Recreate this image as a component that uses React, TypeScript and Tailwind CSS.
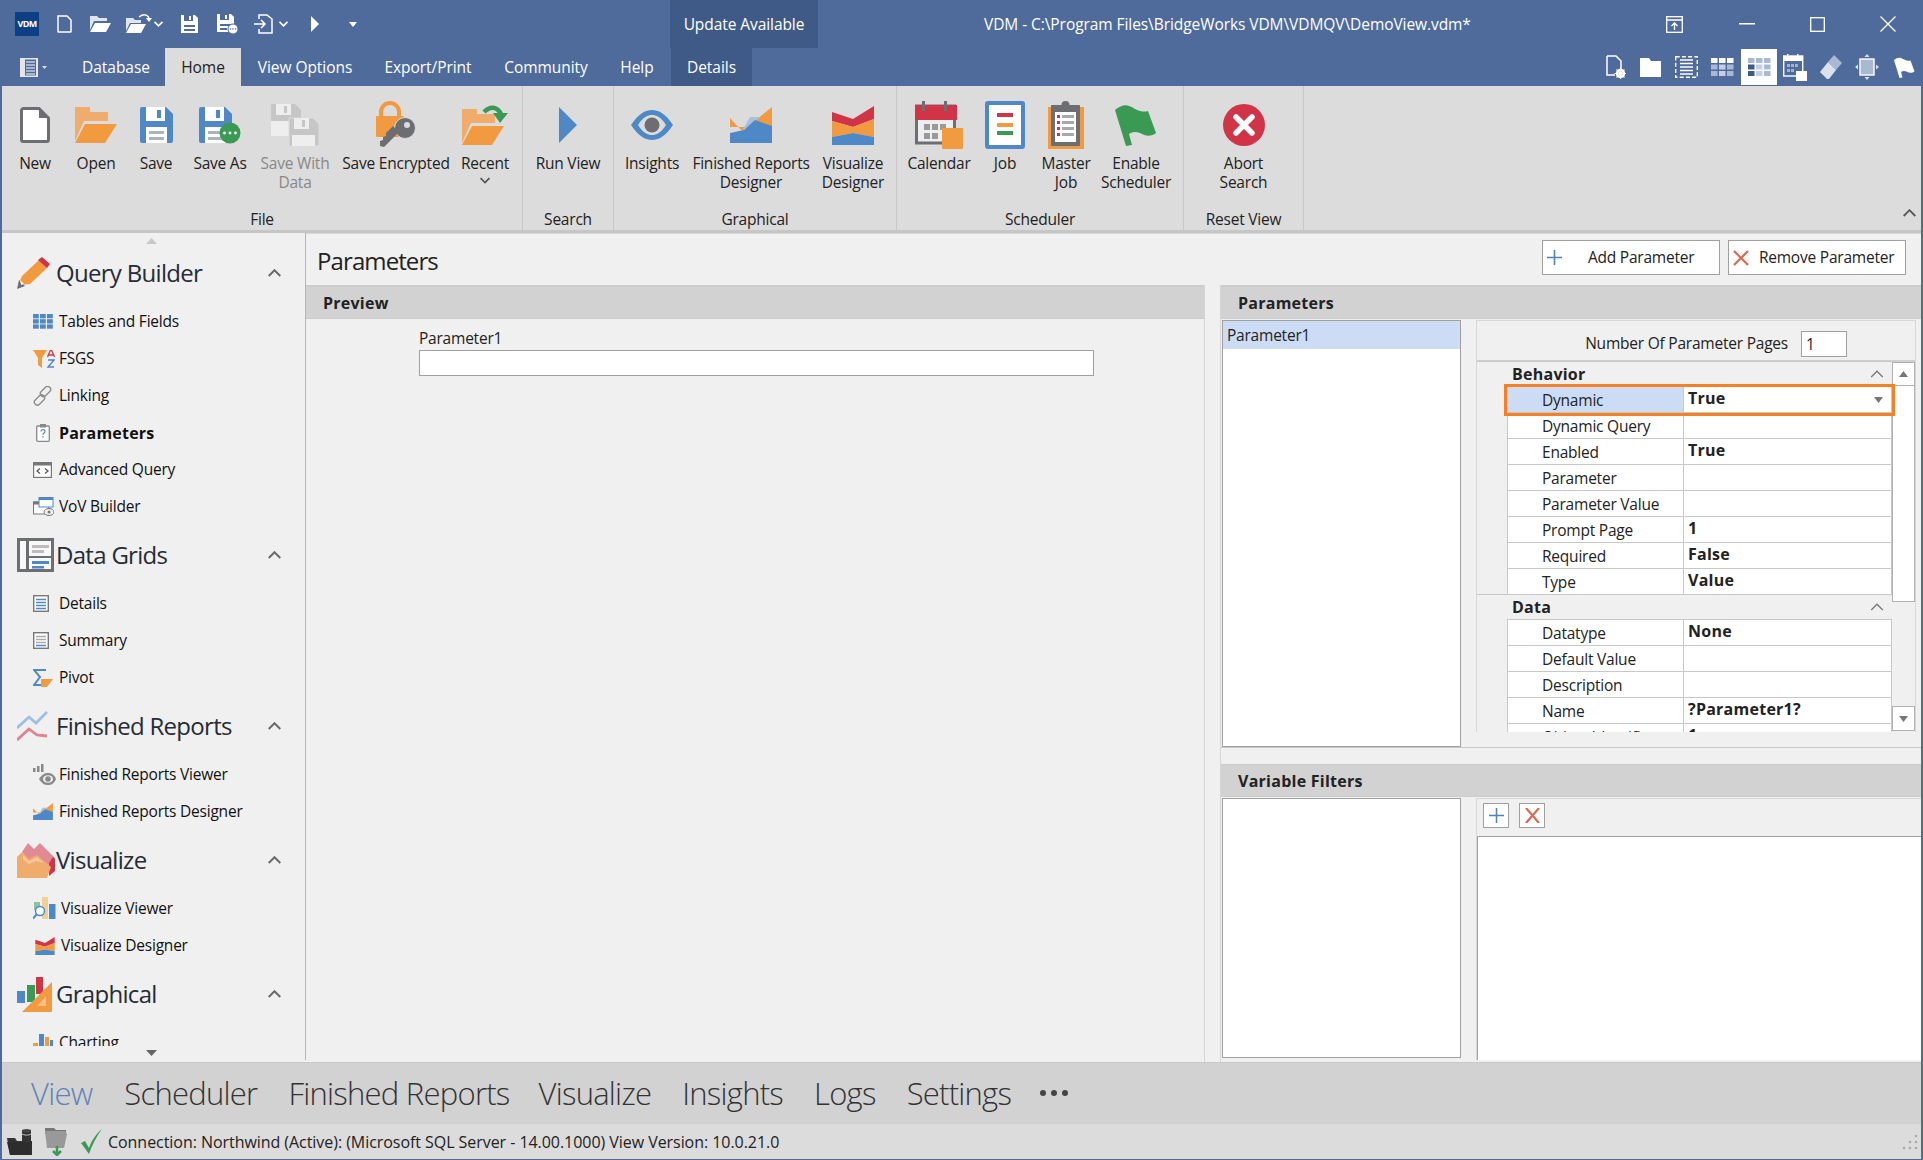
import React from "react";

const BLUE = "#4e88c7";
const ORANGE = "#f29a3f";
const LORANGE = "#f0ac6c";
const RED = "#d13347";
const GREEN = "#3a9a54";
const GRAY = "#6d6e71";

type IconProps = { w?: number; h?: number };

const Doc = ({ w = 30, h = 36 }: IconProps) => (
  <svg width={w} height={h} viewBox="0 0 30 36">
    <path d="M3 1.5h16l9.5 9.5v21.5a2 2 0 0 1-2 2H3.5a2 2 0 0 1-2-2V3.5a2 2 0 0 1 2-2z" fill="#fff" stroke={GRAY} strokeWidth="3" />
    <path d="M19 1.5v9.5h9.5z" fill={GRAY} />
  </svg>
);
const Folder = ({ w = 42, h = 36 }: IconProps) => (
  <svg width={w} height={h} viewBox="0 0 42 36">
    <path d="M0 0h15v5h18v9H9L0 34z" fill={LORANGE} />
    <path d="M10 17h32L30 36H0z" fill={ORANGE} />
  </svg>
);
const Floppy = ({ w = 33, h = 36, c = BLUE }: IconProps & { c?: string }) => (
  <svg width={w} height={h} viewBox="0 0 33 36">
    <path d="M2 0h24l7 7v27a2 2 0 0 1-2 2H2a2 2 0 0 1-2-2V2a2 2 0 0 1 2-2z" fill={c} />
    <rect x="6" y="0" width="19" height="14" fill="#fff" />
    <rect x="17" y="3" width="4" height="8" fill={c} />
    <rect x="6" y="20" width="21" height="16" fill="#fff" />
    <rect x="9" y="24" width="15" height="3" fill="#aab4bf" />
    <rect x="9" y="30" width="15" height="3" fill="#aab4bf" />
  </svg>
);
const SaveAsIcon = () => (
  <svg width="42" height="37" viewBox="0 0 42 37">
    <path d="M2 0h24l7 7v27a2 2 0 0 1-2 2H2a2 2 0 0 1-2-2V2a2 2 0 0 1 2-2z" fill={BLUE} />
    <rect x="6" y="0" width="19" height="14" fill="#fff" />
    <rect x="17" y="3" width="4" height="8" fill={BLUE} />
    <rect x="6" y="20" width="21" height="16" fill="#fff" />
    <rect x="9" y="24" width="15" height="3" fill="#aab4bf" />
    <rect x="9" y="30" width="15" height="3" fill="#aab4bf" />
    <circle cx="31" cy="26" r="10.5" fill={GREEN} />
    <circle cx="25.5" cy="26" r="1.4" fill="#fff" />
    <circle cx="31" cy="26" r="1.4" fill="#fff" />
    <circle cx="36.5" cy="26" r="1.4" fill="#fff" />
  </svg>
);
const SaveDataIcon = () => (
  <svg width="48" height="42" viewBox="0 0 48 42">
    <path d="M0 0h24l6 6v26H0z" fill="#c6c6c6" />
    <rect x="5" y="0" width="15" height="11" fill="#eee" />
    <rect x="13" y="2" width="3" height="7" fill="#c6c6c6" />
    <rect x="0" y="17" width="24" height="15" fill="#eee" />
    <path d="M18 14h24l6 6v22H18z" fill="#c6c6c6" stroke="#dcdcdc" strokeWidth="1" />
    <rect x="23" y="14" width="15" height="11" fill="#eee" />
    <rect x="31" y="16" width="3" height="7" fill="#c6c6c6" />
    <rect x="21" y="31" width="23" height="11" fill="#eee" />
  </svg>
);
const LockKey = () => (
  <svg width="40" height="48" viewBox="0 0 40 48">
    <path d="M5 16v-5a9 9 0 0 1 18 0v5" fill="none" stroke={ORANGE} strokeWidth="4" />
    <rect x="0" y="15" width="28" height="21" rx="1" fill={ORANGE} />
    <circle cx="29" cy="27" r="10.5" fill={GRAY} stroke="#dcdcdc" strokeWidth="1" />
    <path d="M23 31L8 46l-4-1v-5l3-1v-3l3-1v-3l7-7z" fill={GRAY} />
    <circle cx="31" cy="24" r="3" fill="#dcdcdc" />
  </svg>
);
const RecentIcon = () => (
  <svg width="46" height="40" viewBox="0 0 46 40">
    <path d="M0 4h15v5h18v9H9L0 38z" fill={LORANGE} />
    <path d="M10 21h32L30 40H0z" fill={ORANGE} />
    <path d="M22 7c6-6 13-6 17 2" fill="none" stroke={GREEN} strokeWidth="4.5" />
    <path d="M31 8h15l-8 10z" fill={GREEN} />
  </svg>
);
const Tri = ({ w = 18, h = 36, c = BLUE }: IconProps & { c?: string }) => (
  <svg width={w} height={h} viewBox="0 0 18 36"><path d="M0 0l18 18L0 36z" fill={c} /></svg>
);
const Eye = () => (
  <svg width="42" height="30" viewBox="0 0 42 30">
    <path d="M0 15C8 3 15 0 21 0s13 3 21 15c-8 12-15 15-21 15S8 27 0 15z" fill={BLUE} />
    <path d="M7 15c5-8 10-10 14-10s9 2 14 10c-5 8-10 10-14 10S12 23 7 15z" fill="#dcdcdc" />
    <circle cx="21" cy="15" r="7.5" fill={GRAY} />
  </svg>
);
const AreaChart = ({ w = 42, h = 36 }: IconProps) => (
  <svg width={w} height={h} viewBox="0 0 42 36">
    <path d="M0 11l12 13L42 0v20H0z" fill={ORANGE} />
    <path d="M12 24l8-14h11L25 14z" fill="#a8c0dc" />
    <path d="M0 26l14-3 11-10 17 6v17H0z" fill={BLUE} />
  </svg>
);
const Ribbons = ({ w = 42, h = 39 }: IconProps) => (
  <svg width={w} height={h} viewBox="0 0 42 39">
    <path d="M0 6L21 13 42 0V13L21 21 0 15z" fill={RED} />
    <path d="M0 15L21 21 42 13V31L21 27 0 31z" fill={ORANGE} />
    <path d="M0 31L21 27 42 31V39H0z" fill={BLUE} />
  </svg>
);
const Cal = () => (
  <svg width="48" height="48" viewBox="0 0 48 48">
    <rect x="1.5" y="5" width="38" height="37" fill="#eee" stroke={GRAY} strokeWidth="3" />
    <rect x="0" y="4" width="42" height="15" fill={RED} />
    <rect x="7" y="0" width="3" height="10" fill={GRAY} />
    <rect x="29" y="0" width="3" height="10" fill={GRAY} />
    {[9, 17, 25].map((x) => <rect key={x} x={x} y="23" width="6" height="6" fill="#999" />)}
    {[9, 17].map((x) => <rect key={x} x={x} y="32" width="6" height="6" fill="#999" />)}
    <rect x="27" y="27" width="21" height="21" rx="1" fill={ORANGE} />
  </svg>
);
const JobIcon = () => (
  <svg width="40" height="48" viewBox="0 0 40 48">
    <rect x="2" y="2" width="36" height="44" rx="1" fill="#fff" stroke={BLUE} strokeWidth="4" />
    <rect x="12" y="12" width="16" height="4" fill={RED} />
    <rect x="12" y="22" width="16" height="4" fill={ORANGE} />
    <rect x="12" y="30" width="16" height="4" fill={GREEN} />
  </svg>
);
const MasterJob = () => (
  <svg width="36" height="48" viewBox="0 0 36 48">
    <rect x="0" y="6" width="36" height="42" fill={ORANGE} />
    <rect x="3" y="4" width="29" height="41" rx="1" fill={GRAY} />
    <circle cx="17.5" cy="4" r="4" fill={GRAY} />
    <rect x="7" y="11" width="21" height="30" fill="#fff" />
    {[14, 20, 26, 32].map((y) => (
      <g key={y}>
        <rect x="9" y={y} width="3" height="3" fill={RED} />
        <rect x="14" y={y} width="12" height="3" fill="#a8a8a8" />
      </g>
    ))}
  </svg>
);
const Flag = ({ w = 42, h = 42, c = GREEN }: IconProps & { c?: string }) => (
  <svg width={w} height={h} viewBox="0 0 42 42">
    <path d="M0 6c8-6 12-6 20-1 6 3 10 3 13 2l8 22c-5 4-11 3-16 0-5-2-8-1-11 1l3 11-6 1z" fill={c} />
  </svg>
);
const Abort = () => (
  <svg width="42" height="42" viewBox="0 0 42 42">
    <ellipse cx="21" cy="21" rx="21" ry="21" fill={RED} />
    <path d="M13 13l16 16M29 13L13 29" stroke="#fff" strokeWidth="5.5" strokeLinecap="round" />
  </svg>
);

/* white title-bar glyphs */
const QDoc = () => (
  <svg width="15" height="18" viewBox="0 0 15 18"><path d="M1 1h9l4 4v11.500a.5.500 0 0 1-.5.500h-12a.5.500 0 0 1-.5-.5z" fill="none" stroke="#fff" strokeWidth="1.500" /></svg>
);
const QFolder = () => (
  <svg width="21" height="16" viewBox="0 0 21 16"><path d="M0 0h7l2 2h8v3H4L0 14z" fill="#dfe5ee" /><path d="M5 7h16l-5 9H0z" fill="#fff" /></svg>
);
const QFolderArrow = () => (
  <svg width="26" height="20" viewBox="0 0 26 20"><path d="M0 5h7l2 2h6v3H4L0 18z" fill="#dfe5ee" /><path d="M5 11h15l-5 9H0z" fill="#fff" /><path d="M13 4c4-3 8-3 10 1" fill="none" stroke="#fff" strokeWidth="1.500" /><path d="M20 5h6l-3 4z" fill="#fff" /></svg>
);
const QSave = () => (
  <svg width="17" height="18" viewBox="0 0 17 18"><path d="M0 0h14l3 3v15H0z" fill="#fff" /><rect x="3" y="0" width="9" height="6" fill="#4e6b9b" /><rect x="8" y="1" width="2" height="4" fill="#fff" /><rect x="3" y="10" width="11" height="2" fill="#4e6b9b" /><rect x="3" y="14" width="11" height="2" fill="#4e6b9b" /></svg>
);
const QSaveAs = () => (
  <svg width="21" height="20" viewBox="0 0 21 20"><path d="M0 0h14l3 3v15H0z" fill="#fff" /><rect x="3" y="0" width="9" height="6" fill="#4e6b9b" /><rect x="8" y="1" width="2" height="4" fill="#fff" /><rect x="3" y="10" width="11" height="2" fill="#4e6b9b" /><rect x="3" y="14" width="7" height="2" fill="#4e6b9b" /><circle cx="16" cy="15" r="5" fill="#fff" stroke="#4e6b9b" /><circle cx="13.500" cy="15" r=".8" fill="#4e6b9b" /><circle cx="16" cy="15" r=".8" fill="#4e6b9b" /><circle cx="18.500" cy="15" r=".8" fill="#4e6b9b" /></svg>
);
const QExport = () => (
  <svg width="20" height="20" viewBox="0 0 20 20"><path d="M5 5V1h8l5 4v14H5v-4" fill="none" stroke="#fff" strokeWidth="1.500" /><path d="M0 10h10M7 6l4 4-4 4" fill="none" stroke="#fff" strokeWidth="1.500" /></svg>
);
const Chev = ({ c = "#fff", w = 9, h = 6, sw = 1.6 }: { c?: string; w?: number; h?: number; sw?: number }) => (
  <svg width={w} height={h} viewBox="0 0 9 6"><path d="M.5 .8L4.500 4.800 8.500 .8" fill="none" stroke={c} strokeWidth={sw} /></svg>
);
const ChevUp = ({ w = 13, h = 8, c = "#6b6b6b", sw = 2 }: { w?: number; h?: number; c?: string; sw?: number }) => (
  <svg width={w} height={h} viewBox="0 0 13 8"><path d="M.7 7L6.500 1.200 12.300 7" fill="none" stroke={c} strokeWidth={sw} /></svg>
);

/* Right hand toolbar */
const G1 = () => (
  <svg width="20" height="24" viewBox="0 0 20 24"><path d="M1 1h9l5 5v9M1 1v19h8" fill="none" stroke="#fff" strokeWidth="1.500" /><circle cx="14.500" cy="18.500" r="3.500" fill="none" stroke="#fff" strokeWidth="2.500" /><path d="M14.500 12.500v12M8.500 18.500h12M10.500 14.500l8 8M18.500 14.500l-8 8" stroke="#fff" strokeWidth="1.200" /></svg>
);
const G2 = () => (
  <svg width="21" height="19" viewBox="0 0 21 19"><path d="M0 0h9l2 3h10v16H0z" fill="#fff" /></svg>
);
const G3 = () => (
  <svg width="23" height="22" viewBox="0 0 23 22"><rect x=".7" y=".7" width="21.600" height="20.600" fill="none" stroke="#fff" strokeWidth="1.400" strokeDasharray="4 2.200" /><path d="M5 4h13M5 7.500h13M5 11h13M5 14.500h13M5 18h13" stroke="#fff" strokeWidth="1.500" /></svg>
);
const GridG = ({ a, b, c, d }: { a: string; b: string; c: string; d?: string }) => (
  <svg width="23" height="18" viewBox="0 0 23 18">
    <rect x="0" y="0" width="6.500" height="5" fill={a} /><rect x="8" y="0" width="6.500" height="5" fill={a} /><rect x="16" y="0" width="6.500" height="5" fill={a} />
    <rect x="0" y="6.500" width="6.500" height="5" fill={d || b} /><rect x="8" y="6.500" width="6.500" height="5" fill={c} /><rect x="16" y="6.500" width="6.500" height="5" fill={b} />
    <rect x="0" y="13" width="6.500" height="5" fill={d || b} /><rect x="8" y="13" width="6.500" height="5" fill={c} /><rect x="16" y="13" width="6.500" height="5" fill={b} />
  </svg>
);
const G6 = () => (
  <svg width="24" height="27" viewBox="0 0 24 27">
    <rect x=".7" y="2" width="19" height="20" fill="none" stroke="#fff" strokeWidth="1.400" />
    <rect x="0" y="2" width="20" height="5" fill="#fff" />
    <rect x="4" y="0" width="1.500" height="4" fill="#fff" /><rect x="14" y="0" width="1.500" height="4" fill="#fff" />
    {[4, 8, 12].map((x) => <rect key={x} x={x} y="10" width="3" height="3" fill="#9fb2cf" />)}
    {[4, 8].map((x) => <rect key={x} x={x} y="15" width="3" height="3" fill="#9fb2cf" />)}
    <rect x="13" y="17" width="11" height="10" fill="#fff" />
  </svg>
);
const G7 = () => (
  <svg width="22" height="24" viewBox="0 0 22 24"><path d="M14 0l8 8-6 7-8-8z" fill="#a9b9d2" /><path d="M8 7l8 8-7 9-2 0-7-7z" fill="#dbe2ed" /></svg>
);
const G8 = () => (
  <svg width="24" height="26" viewBox="0 0 24 26">
    <rect x="5" y="5" width="14" height="16" fill="#a9b9d2" stroke="#fff" strokeWidth="1.400" />
    <path d="M12 0l2.500 3h-5zM12 26l2.500-3h-5zM0 13l3-2.500v5zM24 13l-3-2.500v5z" fill="#dbe2ed" />
  </svg>
);

/* Sidebar glyphs */
const Pencil = ({ w = 33, h = 32 }: IconProps) => (
  <svg width={w} height={h} viewBox="0 0 33 32">
    <path d="M1 28l4-9L22 3l8 8L13 27z" fill={ORANGE} />
    <path d="M21 3l4-3 8 7-3 4z" fill={RED} />
    <path d="M0 32l2-9 6 6z" fill={GRAY} />
    <path d="M3 23l4 4-3 1z" fill="#fff" />
  </svg>
);
const TablesIcon = () => (
  <svg width="20" height="15" viewBox="0 0 20 15">
    {[0, 5.2, 10.400].flatMap((y) => [0, 7, 14].map((x) => <rect key={`${x}-${y}`} x={x} y={y} width="5.800" height="4.300" fill={BLUE} />))}
  </svg>
);
const FsgsIcon = () => (
  <svg width="22" height="18" viewBox="0 0 22 18">
    <path d="M0 0h14L9 8v10l-4-3V8z" fill={ORANGE} />
    <path d="M14.500 7l3-7h1l3 7M15.500 5h5" fill="none" stroke={RED} strokeWidth="1.300" />
    <path d="M15 10h6l-6 7h6" fill="none" stroke={BLUE} strokeWidth="1.400" />
  </svg>
);
const LinkIcon = () => (
  <svg width="20" height="20" viewBox="0 0 20 20" fill="none" stroke="#8a8a8a" strokeWidth="1.300">
    <rect x="9.500" y="-.5" width="6" height="12" rx="3" transform="rotate(45 12.500 5.500)" />
    <rect x="3.500" y="8" width="6" height="12" rx="3" transform="rotate(45 6.500 14)" />
  </svg>
);
const ParamIcon = () => (
  <svg width="14" height="18" viewBox="0 0 14 18">
    <rect x=".7" y="2" width="12.600" height="15.300" rx="1" fill="#fff" stroke="#888" strokeWidth="1.300" />
    <rect x="4" y="0" width="6" height="3.500" fill="#888" />
    <path d="M5 7.500c0-2.500 4-2.500 4 0 0 1.500-2 1.500-2 3.200M7 12v1.600" fill="none" stroke={BLUE} strokeWidth="1.200" />
  </svg>
);
const AdvIcon = () => (
  <svg width="19" height="16" viewBox="0 0 19 16">
    <rect x=".6" y=".6" width="17.800" height="14.800" fill="#fff" stroke="#777" strokeWidth="1.200" />
    <rect x="0" y="0" width="19" height="3.500" fill="#777" />
    <path d="M7 6.500L4 9l3 2.500M12 6.500L15 9l-3 2.500" fill="none" stroke="#555" strokeWidth="1.300" />
  </svg>
);
const VovIcon = () => (
  <svg width="21" height="19" viewBox="0 0 21 19">
    <rect x=".5" y="5" width="15" height="12" fill="#fff" stroke="#777" />
    <rect x="0" y="4.500" width="16" height="3" fill="#777" />
    <rect x="6" y="0" width="14" height="10" fill="#fff" stroke={BLUE} />
    <rect x="6" y="0" width="14" height="3" fill={BLUE} />
    <ellipse cx="16" cy="15" rx="5" ry="3.500" fill="#f0f0f0" stroke="#777" />
    <circle cx="16" cy="15" r="1.500" fill="#777" />
  </svg>
);
const DataGridsIcon = () => (
  <svg width="37" height="34" viewBox="0 0 37 34">
    <rect x="1.500" y="1.500" width="34" height="31" fill="#f8f8f8" stroke={GRAY} strokeWidth="3" />
    <rect x="9" y="1" width="3" height="32" fill={GRAY} />
    <rect x="15" y="7" width="17" height="3" fill="#bdbdbd" />
    <rect x="15" y="12" width="12" height="3" fill="#bdbdbd" />
    <rect x="12" y="18" width="24" height="2" fill={GRAY} />
    <rect x="15" y="23" width="17" height="3" fill={BLUE} />
    <rect x="15" y="28" width="12" height="2.500" fill={BLUE} />
  </svg>
);
const DetailsIcon = () => (
  <svg width="16" height="17" viewBox="0 0 16 17">
    <rect x=".7" y=".7" width="14.600" height="15.600" fill="#fff" stroke="#777" strokeWidth="1.400" />
    <path d="M3 4.500h10M3 7.500h10M3 10.500h10M3 13.500h10" stroke={BLUE} strokeWidth="1.300" />
  </svg>
);
const SummaryIcon = () => (
  <svg width="16" height="17" viewBox="0 0 16 17">
    <rect x=".7" y=".7" width="14.600" height="15.600" fill="#fff" stroke="#777" strokeWidth="1.400" />
    <path d="M3 4.500h10M3 7.500h10M3 10.500h10" stroke="#aaa" strokeWidth="1.300" />
    <path d="M3 13.500h10" stroke={BLUE} strokeWidth="1.500" />
  </svg>
);
const PivotIcon = () => (
  <svg width="20" height="18" viewBox="0 0 20 18">
    <path d="M1 1h12M12 1L1 1l6 7-6 8h12" fill="none" stroke={BLUE} strokeWidth="2" />
    <path d="M8 10h12l-6 8H8z" fill={ORANGE} />
  </svg>
);
const FRIcon = () => (
  <svg width="31" height="31" viewBox="0 0 31 31" fill="none" strokeWidth="2.800">
    <path d="M0 17L12 6l7 6L30 1" stroke="#9dbfe3" />
    <path d="M0 29L12 18l8 6 10 1" stroke="#e0828f" />
  </svg>
);
const FRViewer = () => (
  <svg width="23" height="22" viewBox="0 0 23 22">
    <rect x="0" y="4" width="2.500" height="4" fill="#888" /><rect x="4" y="2" width="2.500" height="6" fill="#888" /><rect x="8" y="0" width="2.500" height="8" fill="#888" />
    <path d="M6 15c3-5 6-6 9-6s6 1 8 6c-2 5-5 6-8 6s-6-1-9-6z" fill="#8a8a8a" />
    <ellipse cx="15" cy="15" rx="5" ry="3.800" fill="#f0f0f0" />
    <circle cx="15" cy="15" r="2.800" fill="#8a8a8a" />
  </svg>
);
const VisHead = () => (
  <svg width="38" height="35" viewBox="0 0 38 35">
    <path d="M5 9L11 0l6 6 6-6 15 15-4 8-12-6-8 2z" fill="#e18a95" />
    <path d="M36 14l2 2v12l-6 5V20z" fill={RED} />
    <path d="M0 14l5-5 7 7 8-4 14 12-4 11H0z" fill={LORANGE} />
    <path d="M6 12l6 6 8-4 7 6-8-2-7 3-6-5z" fill="#f5c79b" />
  </svg>
);
const VisViewer = () => (
  <svg width="23" height="23" viewBox="0 0 23 23">
    <rect x="1" y="5" width="6" height="8" fill="#8fc2a4" />
    <rect x="9" y="0" width="6" height="22" fill="#f3cf92" />
    <rect x="16" y="7" width="6.500" height="15" fill={BLUE} />
    <circle cx="7" cy="14" r="4.500" fill="#fff" stroke={BLUE} strokeWidth="1.500" />
    <path d="M3.500 17.500L0 21.500" stroke={BLUE} strokeWidth="2" />
  </svg>
);
const GraphIcon = () => (
  <svg width="35" height="35" viewBox="0 0 35 35">
    <rect x="0" y="14" width="8" height="12" fill={BLUE} />
    <rect x="10" y="8" width="8" height="17" fill={GREEN} />
    <rect x="19" y="0" width="7" height="17" fill={RED} />
    <path d="M35 5v30H5z" fill={ORANGE} />
    <path d="M29 19v10H20z" fill="#f6bd85" />
  </svg>
);
const ChartIcon = () => (
  <svg width="20" height="18" viewBox="0 0 20 18">
    <rect x="0" y="9" width="5" height="9" fill={ORANGE} />
    <rect x="6" y="0" width="5" height="18" fill={BLUE} />
    <rect x="12" y="3" width="4" height="15" fill={ORANGE} />
    <rect x="17" y="6" width="3" height="12" fill={BLUE} />
  </svg>
);

const StatusDb = () => (
  <svg width="25" height="26" viewBox="0 0 25 26">
    <path d="M0 9h8l2 3h15v14H3z" fill="#333" />
    <path d="M0 13h25l-1 13H3z" fill="#2d2d2d" />
    <rect x="15" y="1" width="9" height="11" fill="#333" />
    <ellipse cx="19.500" cy="1.800" rx="4.500" ry="1.800" fill="#444" />
    <path d="M15 5c2 1.500 7 1.500 9 0" stroke="#ddd" strokeWidth=".8" fill="none" />
  </svg>
);
const StatusFolder = () => (
  <svg width="22" height="28" viewBox="0 0 22 28">
    <path d="M0 0h9l2 2h10v4H0z" fill="#777" />
    <path d="M0 3h20l2 3-3 14H2z" fill="#999" />
    <path d="M12 18v8M8 23l4 4 4-4" fill="none" stroke={GREEN} strokeWidth="2.500" />
  </svg>
);
const StatusCheck = () => (
  <svg width="22" height="25" viewBox="0 0 22 25"><path d="M0 14l4-2 4 7C11 11 15 5 21 0 15 8 11 16 8 25z" fill={GREEN} /></svg>
);

type Item = { icon: React.ReactNode; label: string[]; w: string; dim?: boolean; chevron?: boolean };

const RibbonItem = ({ item }: { item: Item }) => (
  <div className={`flex flex-col items-center shrink-0 ${item.w}`}>
    <div className="h-[58px] flex items-center justify-center">{item.icon}</div>
    <div className={`flex flex-col items-center leading-[19px] whitespace-nowrap ${item.dim ? "text-[#888]" : "text-[#222]"}`}>
      {item.label.map((l) => <span key={l}>{l}</span>)}
      {item.chevron && <span className="mt-[4px]"><Chev c="#555" w={10} h={7} sw={1.5} /></span>}
    </div>
  </div>
);

const RibbonGroup = ({ title, items, w }: { title: string; items: Item[]; w: string }) => (
  <div className={`flex flex-col shrink-0 border-r border-[#c6c6c6] ${w}`}>
    <div className="flex h-[122px] pt-[10px]">
      {items.map((i) => <RibbonItem key={i.label.join(" ")} item={i} />)}
    </div>
    <div className="h-[22px] leading-[23px] text-center text-[#222]">{title}</div>
  </div>
);

const NavHead = ({ icon, text }: { icon: React.ReactNode; text: string }) => (
  <div className="h-[60px] flex items-center shrink-0">
    <div className="w-[54px] pl-[15px] flex items-center">{icon}</div>
    <span className="flex-1 text-[24px] tracking-[-0.7px] text-[#252c35]">{text}</span>
    <span className="mr-[24px]"><ChevUp /></span>
  </div>
);
const NavItem = ({ icon, text, bold, wide }: { icon: React.ReactNode; text: string; bold?: boolean; wide?: boolean }) => (
  <div className="h-[37px] flex items-center shrink-0">
    <div className={`${wide ? "w-[59px]" : "w-[57px]"} pl-[31px] flex items-center justify-start`}>{icon}</div>
    <span className={bold ? "font-bold text-[16px] tracking-[0.2px] text-[#111]" : "text-[#111]"}>{text}</span>
  </div>
);

const Row = ({ name, value, selected }: { name: string; value?: string; selected?: boolean }) => (
  <div className="flex h-[26px] shrink-0">
    <div className="w-[30px] bg-[#f0f0f0]" />
    <div className={`flex flex-1 ${selected ? "outline-[3px] outline-[#f58025] relative z-10" : ""}`}>
      <div className={`w-[177px] border-r border-b border-l border-[#c8c8c8] pl-[34px] leading-[26px] text-[#222] ${selected ? "bg-[#cddcf5]" : "bg-white"}`}>{name}</div>
      <div className="flex-1 flex items-center justify-between border-r border-b border-[#c8c8c8] pl-[4px] pr-[8px] font-bold text-[16px] tracking-[0.25px] text-[#222] leading-[23px] bg-white">
        <span className="-mt-[2px]">{value}</span>
        {selected && <svg width="9" height="6" viewBox="0 0 9 6"><path d="M0 0h9L4.500 6z" fill="#777" /></svg>}
      </div>
    </div>
  </div>
);
const GroupRow = ({ name }: { name: string }) => (
  <div className="h-[25px] shrink-0 flex flex-col bg-[#f0f0f0] shadow-[0_-1px_0_#c8c8c8]">
    <div className="h-[24px] flex items-center pl-[35px] pr-[8px] justify-between">
      <span className="font-bold text-[16px] tracking-[0.25px] text-[#222]">{name}</span>
      <ChevUp w={14} h={8} c="#777" sw={1.3} />
    </div>
    <div className="h-[1px] ml-[30px] bg-[#c8c8c8]" />
  </div>
);

const BAR = "bg-[#d2d2d2] font-bold text-[16px] tracking-[0.25px] text-[#222]";

export default function App() {
  return (
    <div className="w-[1923px] h-[1160px] overflow-hidden flex flex-col bg-[#4e6b9b] font-['Open_Sans','Liberation_Sans',sans-serif] text-[15.5px] tracking-[-0.22px]">
      {/* Title bar */}
      <div className="h-[48px] flex items-center shrink-0 text-white bg-[#4e6b9b] tracking-[-0.07px]">
        <div className="ml-[15px] w-[24px] h-[24px] bg-[#0b3f86] flex items-center justify-center text-[9px] font-bold tracking-[-0.6px]">VDM</div>
        <div className="ml-[18px]"><QDoc /></div>
        <div className="ml-[18px]"><QFolder /></div>
        <div className="ml-[15px] -mt-[3px]"><QFolderArrow /></div>
        <div className="ml-[2px]"><Chev /></div>
        <div className="ml-[18px]"><QSave /></div>
        <div className="ml-[19px]"><QSaveAs /></div>
        <div className="ml-[16px]"><QExport /></div>
        <div className="ml-[5px]"><Chev /></div>
        <div className="ml-[22px]"><Tri w={10} h={16} c="#fff" /></div>
        <svg className="ml-[29px]" width="8" height="5" viewBox="0 0 8 5"><path d="M0 0h8L4 5z" fill="#fff" /></svg>
        <div className="ml-[313px] w-[148px] h-[48px] bg-[#3f5a86] flex items-center justify-center shrink-0 pt-[1px]">Update Available</div>
        <div className="ml-[166px] w-[488px] whitespace-nowrap shrink-0 pt-[1px]">VDM - C:\Program Files\BridgeWorks VDM\VDMQV\DemoView.vdm*</div>
        <div className="ml-[194px]">
          <svg width="17" height="17" viewBox="0 0 17 17" fill="none" stroke="#fff" strokeWidth="1.300"><rect x=".7" y=".7" width="15.600" height="15.600" /><path d="M.7 4h15.600M8.500 14V7M5.500 10l3-3 3 3" /></svg>
        </div>
        <div className="ml-[56px]"><svg width="16" height="2"><rect width="16" height="1.500" fill="#fff" /></svg></div>
        <div className="ml-[55px]"><svg width="15" height="15" fill="none" stroke="#fff"><rect x=".7" y=".7" width="13.600" height="13.600" strokeWidth="1.300" /></svg></div>
        <div className="ml-[55px]"><svg width="16" height="16" stroke="#fff" strokeWidth="1.300"><path d="M.5 .5l15 15M15.500 .5l-15 15" /></svg></div>
      </div>

      {/* Tabs */}
      <div className="h-[38px] flex items-center shrink-0 text-white bg-[#4e6b9b] tracking-[-0.05px]">
        <div className="w-[72px] pl-[20px] flex items-center gap-[4px] shrink-0">
          <svg width="18" height="19" viewBox="0 0 18 19"><rect x="0" y="0" width="18" height="19" fill="#e6e6e6" /><rect x="5" y="1.500" width="11" height="16" fill="#4e6b9b" /><path d="M6 4h9M6 7h9M6 10h9M6 13h9M6 16h9" stroke="#fff" strokeWidth="1.200" /></svg>
          <svg width="5" height="3" viewBox="0 0 5 3"><path d="M0 0h5L2.500 3z" fill="#ddd" /></svg>
        </div>
        <div className="w-[88px] text-center shrink-0 pt-[2px]">Database</div>
        <div className="ml-[5px] w-[76px] h-[38px] bg-[#dcdcdc] text-[#222] flex items-center justify-center shrink-0 pt-[2px]">Home</div>
        <div className="w-[128px] text-center shrink-0 pt-[2px]">View Options</div>
        <div className="w-[118px] text-center shrink-0 pt-[2px]">Export/Print</div>
        <div className="w-[118px] text-center shrink-0 pt-[2px]">Community</div>
        <div className="w-[64px] text-center shrink-0 pt-[2px]">Help</div>
        <div className="ml-[2px] w-[81px] h-[38px] bg-[#3f5a86] flex items-center justify-center shrink-0 pt-[2px]">Details</div>
        <div className="ml-[854px]"><G1 /></div>
        <div className="ml-[14px]"><G2 /></div>
        <div className="ml-[14px]"><G3 /></div>
        <div className="ml-[13px]"><GridG a="#fff" b="#a9b9d2" c="#c4d0e2" /></div>
        <div className="ml-[7px] w-[36px] h-[36px] bg-white flex items-center justify-center"><GridG a="#a9b9d2" b="#a9b9d2" c="#c4d0e2" d="#3c5a8a" /></div>
        <div className="ml-[6px]"><G6 /></div>
        <div className="ml-[13px]"><G7 /></div>
        <div className="ml-[13px]"><G8 /></div>
        <div className="ml-[15px]"><Flag w={21} h={21} c="#fff" /></div>
      </div>

      {/* Everything under the tabs */}
      <div className="flex-1 min-h-0 flex flex-col border-x-2 border-b-[1px] border-[#4e6b9b] bg-[#f0f0f0]">
        {/* Ribbon */}
        <div className="h-[147px] shrink-0 flex bg-[#dcdcdc] border-b-[3px] border-[#c6c6c6]">
          <RibbonGroup title="File" w="w-[521px]" items={[
            { icon: <Doc />, label: ["New"], w: "w-[66px]" },
            { icon: <Folder />, label: ["Open"], w: "w-[56px]" },
            { icon: <Floppy />, label: ["Save"], w: "w-[64px]" },
            { icon: <SaveAsIcon />, label: ["Save As"], w: "w-[64px]" },
            { icon: <SaveDataIcon />, label: ["Save With", "Data"], w: "w-[86px]", dim: true },
            { icon: <LockKey />, label: ["Save Encrypted"], w: "w-[116px]" },
            { icon: <RecentIcon />, label: ["Recent"], w: "w-[62px]", chevron: true },
          ]} />
          <RibbonGroup title="Search" w="w-[91px]" items={[{ icon: <Tri />, label: ["Run View"], w: "w-[90px]" }]} />
          <RibbonGroup title="Graphical" w="w-[283px]" items={[
            { icon: <Eye />, label: ["Insights"], w: "w-[76px]" },
            { icon: <AreaChart />, label: ["Finished Reports", "Designer"], w: "w-[122px]" },
            { icon: <Ribbons />, label: ["Visualize", "Designer"], w: "w-[82px]" },
          ]} />
          <RibbonGroup title="Scheduler" w="w-[287px]" items={[
            { icon: <Cal />, label: ["Calendar"], w: "w-[84px]" },
            { icon: <JobIcon />, label: ["Job"], w: "w-[48px]" },
            { icon: <MasterJob />, label: ["Master", "Job"], w: "w-[74px]" },
            { icon: <Flag />, label: ["Enable", "Scheduler"], w: "w-[66px]" },
          ]} />
          <RibbonGroup title="Reset View" w="w-[120px]" items={[{ icon: <Abort />, label: ["Abort", "Search"], w: "w-[119px]" }]} />
          <div className="ml-auto self-end mb-[13px] mr-[5px]"><ChevUp w={13} h={8} c="#555" sw={1.800} /></div>
        </div>

        {/* Main */}
        <div className="flex-1 min-h-0 flex">
          {/* Sidebar */}
          <div className="w-[304px] shrink-0 h-[827px] flex flex-col border-r border-[#b5b5b5] bg-[#f0f0f0]">
            <div className="h-[10px] shrink-0 flex justify-center pt-[5px] pr-[4px]">
              <svg width="11" height="6" viewBox="0 0 11 6"><path d="M0 6h11L5.500 0z" fill="#c8c8c8" /></svg>
            </div>
            <div className="h-[803px] overflow-hidden flex flex-col">
              <NavHead icon={<Pencil />} text="Query Builder" />
              <NavItem icon={<TablesIcon />} text="Tables and Fields" />
              <NavItem icon={<FsgsIcon />} text="FSGS" />
              <NavItem icon={<LinkIcon />} text="Linking" />
              <NavItem icon={<span className="ml-[3px] flex"><ParamIcon /></span>} text="Parameters" bold />
              <NavItem icon={<AdvIcon />} text="Advanced Query" />
              <NavItem icon={<VovIcon />} text="VoV Builder" />
              <NavHead icon={<DataGridsIcon />} text="Data Grids" />
              <NavItem icon={<DetailsIcon />} text="Details" />
              <NavItem icon={<SummaryIcon />} text="Summary" />
              <NavItem icon={<PivotIcon />} text="Pivot" />
              <NavHead icon={<FRIcon />} text="Finished Reports" />
              <NavItem icon={<FRViewer />} text="Finished Reports Viewer" />
              <NavItem icon={<AreaChart w={20} h={17} />} text="Finished Reports Designer" />
              <NavHead icon={<VisHead />} text="Visualize" />
              <NavItem icon={<VisViewer />} text="Visualize Viewer" wide />
              <NavItem icon={<span className="ml-[2px] flex"><Ribbons w={20} h={18} /></span>} text="Visualize Designer" wide />
              <NavHead icon={<GraphIcon />} text="Graphical" />
              <NavItem icon={<ChartIcon />} text="Charting" />
            </div>
            <div className="flex justify-center pt-[4px] pr-[4px]">
              <svg width="11" height="6" viewBox="0 0 11 6"><path d="M0 0h11L5.500 6z" fill="#666" /></svg>
            </div>
          </div>

          {/* Content */}
          <div className="flex-1 min-w-0 flex flex-col">
            <div className="h-[52px] shrink-0 flex items-center border-t border-[#d6d6d6] pl-[11px] bg-[#f0f0f0]">
              <span className="mt-[2px] text-[24px] tracking-[-0.9px] text-[#222]">Parameters</span>
              <button className="ml-[1104px] mb-[4px] w-[178px] h-[35px] border border-[#a0a0a0] bg-white flex items-center text-[#222] shrink-0">
                <svg className="ml-[4px]" width="15" height="15" viewBox="0 0 15 15"><path d="M7.500 0v15M0 7.500h15" stroke="#4f81bd" strokeWidth="1.600" /></svg>
                <span className="ml-[26px]">Add Parameter</span>
              </button>
              <button className="ml-[8px] mb-[4px] w-[178px] h-[35px] border border-[#a0a0a0] bg-white flex items-center text-[#222] shrink-0">
                <svg className="ml-[4px]" width="16" height="16" viewBox="0 0 16 16"><path d="M1 1l14 14M15 1L1 15" stroke="#dc6a52" strokeWidth="2.200" /></svg>
                <span className="ml-[10px]">Remove Parameter</span>
              </button>
            </div>
            <div className="flex-1 min-h-0 flex">
              {/* Preview */}
              <div className="w-[899px] shrink-0 flex flex-col border-r border-[#d6d6d6]">
                <div className={`h-[34px] shrink-0 pl-[17px] pt-[1px] flex items-center border-t-2 border-b border-[#cccccc] ${BAR}`}>Preview</div>
                <div className="pl-[113px] pt-[10px]">
                  <div className="leading-[19px] h-[21px] text-[#222]">Parameter1</div>
                  <div className="w-[675px] h-[26px] bg-white border border-[#a0a0a0]" />
                </div>
              </div>
              <div className="w-[15px] shrink-0" />
              {/* Right */}
              <div className="flex-1 min-w-0 flex flex-col border-l border-[#d6d6d6]">
                <div className={`h-[34px] shrink-0 pl-[17px] pt-[1px] flex items-center border-t-2 border-b border-[#cccccc] ${BAR}`}>Parameters</div>
                <div className="h-[429px] shrink-0 flex border-b border-[#c8c8c8] pt-[1px] pl-[1px]">
                  <div className="w-[239px] shrink-0 bg-white border border-[#a0a0a0]">
                    <div className="h-[28px] bg-[#cddcf5] pl-[4px] leading-[28px] text-[#222]">Parameter1</div>
                  </div>
                  <div className="ml-[15px] w-[440px] h-[412px] flex flex-col border border-b-0 border-[#d8d8d8]">
                    <div className="h-[41px] shrink-0 flex items-center justify-end pr-[68px] pt-[6px] border-b-[2px] border-[#cfcfcf] text-[#222]">
                      <span>Number Of Parameter Pages</span>
                      <div className="ml-[13px] w-[46px] h-[26px] bg-white border border-[#a0a0a0] pl-[4px] leading-[24px]">1</div>
                    </div>
                    <div className="flex-1 min-h-0 flex">
                      <div className="w-[415px] shrink-0 h-[370px] flex flex-col">
                        <GroupRow name="Behavior" />
                        <Row name="Dynamic" value="True" selected />
                        <Row name="Dynamic Query" />
                        <Row name="Enabled" value="True" />
                        <Row name="Parameter" />
                        <Row name="Parameter Value" />
                        <Row name="Prompt Page" value="1" />
                        <Row name="Required" value="False" />
                        <Row name="Type" value="Value" />
                        <GroupRow name="Data" />
                        <Row name="Datatype" value="None" />
                        <Row name="Default Value" />
                        <Row name="Description" />
                        <Row name="Name" value="?Parameter1?" />
                        <div className="overflow-hidden h-[9px]"><Row name="Object Identifier" value="1" /></div>
                      </div>
                      <div className="flex-1 flex flex-col">
                        <div className="h-[24px] bg-white border border-[#b0b0b0] flex items-center justify-center shrink-0">
                          <svg width="9" height="6" viewBox="0 0 9 6"><path d="M0 6h9L4.500 0z" fill="#777" /></svg>
                        </div>
                        <div className="h-[216px] bg-white border border-t-0 border-[#b0b0b0] shrink-0" />
                        <div className="h-[104px] shrink-0" />
                        <div className="h-[25px] bg-white border border-[#b0b0b0] flex items-center justify-center shrink-0">
                          <svg width="9" height="6" viewBox="0 0 9 6"><path d="M0 0h9L4.500 6z" fill="#777" /></svg>
                        </div>
                      </div>
                    </div>
                  </div>
                </div>
                <div className="h-[16px] shrink-0" />
                <div className={`h-[33px] shrink-0 pl-[17px] flex items-center border-t border-b border-[#cccccc] ${BAR}`}>Variable Filters</div>
                <div className="flex-1 min-h-0 flex pt-[1px] pl-[1px]">
                  <div className="w-[239px] h-[260px] shrink-0 bg-white border border-[#a0a0a0]" />
                  <div className="ml-[15px] flex-1 min-w-0 h-[262px] flex flex-col border-t border-l border-[#d8d8d8]">
                    <div className="h-[37px] shrink-0 flex items-center pl-[6px] pb-[4px] gap-[10px]">
                      <div className="w-[26px] h-[25px] bg-white border border-[#a0a0a0] flex items-center justify-center">
                        <svg width="15" height="15" viewBox="0 0 15 15"><path d="M7.500 0v15M0 7.500h15" stroke="#4f81bd" strokeWidth="1.500" /></svg>
                      </div>
                      <div className="w-[26px] h-[25px] bg-white border border-[#a0a0a0] flex items-center justify-center">
                        <svg width="15" height="15" viewBox="0 0 15 15"><path d="M1 0l13 15M14 0L1 15" stroke="#dc6a52" strokeWidth="2.200" /></svg>
                      </div>
                    </div>
                    <div className="flex-1 bg-white border-t border-l border-[#a0a0a0]" />
                  </div>
                </div>
              </div>
            </div>
          </div>
        </div>

        {/* Bottom nav */}
        <div className="h-[61px] shrink-0 flex items-center bg-[#d2d2d2] border-t border-[#c8c8c8] pl-[29px] gap-[31px] text-[31px] font-light tracking-[-0.75px] text-[#333] whitespace-nowrap">
          <span className="text-[#5f82b5] mr-[1px]">View</span>
          <span>Scheduler</span>
          <span>Finished Reports</span>
          <span className="-ml-[2px]">Visualize</span>
          <span>Insights</span>
          <span>Logs</span>
          <span>Settings</span>
          <span className="flex gap-[5px] -ml-[2px] items-center">
            {[0, 1, 2].map((d) => <span key={d} className="w-[6px] h-[6px] rounded-full bg-[#444]" />)}
          </span>
        </div>

        {/* Status bar */}
        <div className="h-[36px] shrink-0 flex items-center bg-[#dcdcdc] border-t border-[#cfcfcf] text-[#222] pl-[5px]">
          <StatusDb />
          <span className="ml-[13px]"><StatusFolder /></span>
          <span className="ml-[14px]"><StatusCheck /></span>
          <span className="ml-[5px] flex-1 whitespace-nowrap text-[16px] tracking-[-0.05px]">Connection: Northwind (Active): (Microsoft SQL Server - 14.00.1000) View Version: 10.0.21.0</span>
          <svg className="mr-[3px]" width="16" height="16" viewBox="0 0 16 16" fill="#aaa">
            {[[14, 2], [14, 8], [8, 8], [14, 14], [8, 14], [2, 14]].map(([x, y]) => <circle key={`${x}${y}`} cx={x} cy={y} r="1.300" />)}
          </svg>
        </div>
      </div>
    </div>
  );
}
